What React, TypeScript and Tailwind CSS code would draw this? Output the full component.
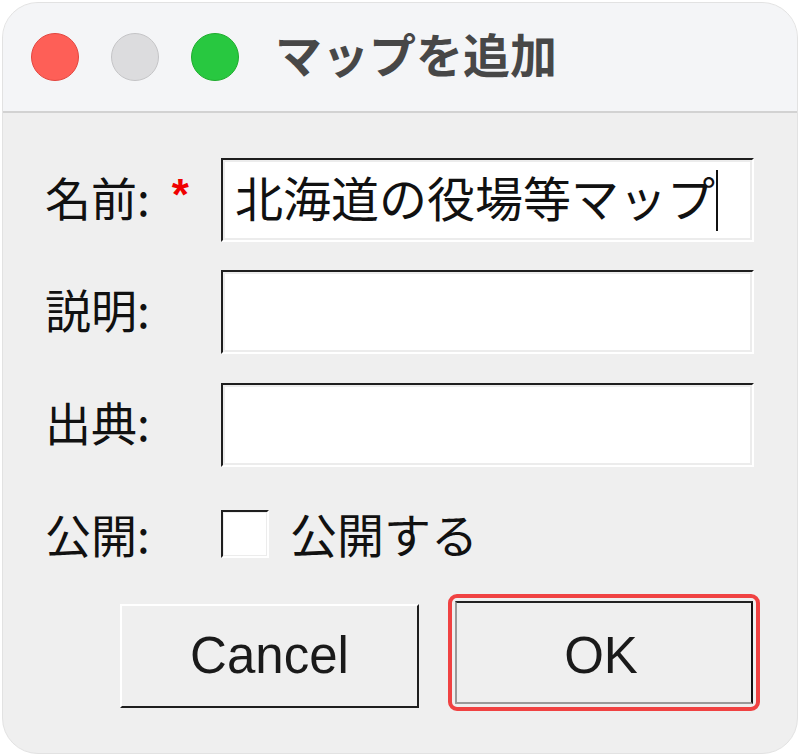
import React from "react";

const jp = { fontFamily: '"Noto Sans CJK JP", "Noto Sans", sans-serif' };
const lat = { fontFamily: '"Liberation Sans", Arial, sans-serif' };

function Field({ children }: { children?: React.ReactNode }) {
  return (
    <div className="w-[533px] h-[84px] bg-white border-2 border-t-[#1e1e1e] border-l-[#1e1e1e] border-b-white border-r-white shadow-[inset_0_0_0_2px_#ececec] flex items-center pl-[12px]">
      {children}
    </div>
  );
}

export default function App() {
  return (
    <div className="w-[800px] h-[756px] bg-white p-[2px]">
      <div className="w-full h-full rounded-[36px] border border-[#e2e2e2] overflow-hidden bg-[#efefef] flex flex-col">
        {/* Title bar */}
        <div className="h-[110px] shrink-0 bg-[#f4f5f7] border-b-2 border-[#d2d2d2] flex items-center pl-[28px] pb-[1px]">
          <div className="w-[48px] h-[48px] rounded-full bg-[#fe5f57] border border-[#e2463f]" />
          <div className="w-[48px] h-[48px] rounded-full bg-[#dcdcde] border border-[#c4c4c6] ml-[32px]" />
          <div className="w-[48px] h-[48px] rounded-full bg-[#28c840] border border-[#1fac2e] ml-[32px]" />
          <div className="ml-[36px] text-[47px] font-bold text-[#474747] leading-none mb-[8px]" style={jp}>
            マップを追加
          </div>
        </div>

        {/* Body */}
        <div className="flex flex-col pl-[42px] pt-[45px] text-[#111]" style={jp}>
          <div className="flex items-center">
            <div className="w-[176px] flex items-center text-[46px] leading-none mb-[8px]">
              <span>名前:</span>
              <span className="ml-[22px] text-[44px] font-bold text-[#f00000] mb-[2px]" style={lat}>*</span>
            </div>
            <Field>
              <span className="text-[48px] leading-none mb-[8px]">北海道の役場等マップ</span>
              <span className="ml-[1px] w-[2px] h-[61px] bg-[#111]" />
            </Field>
          </div>

          <div className="flex items-center mt-[28px]">
            <div className="w-[176px] text-[46px] leading-none mb-[8px]">説明:</div>
            <Field />
          </div>

          <div className="flex items-center mt-[29px]">
            <div className="w-[176px] text-[46px] leading-none mb-[8px]">出典:</div>
            <Field />
          </div>

          <div className="flex items-center mt-[42px]">
            <div className="w-[176px] text-[46px] leading-none mb-[2px]">公開:</div>
            <div className="w-[48px] h-[48px] bg-white border-2 border-t-[#1e1e1e] border-l-[#1e1e1e] border-b-white border-r-white shadow-[inset_0_0_0_1px_#ececec]" />
            <div className="ml-[21px] text-[47px] leading-none mb-[2px]">公開する</div>
          </div>

          <div className="flex items-start mt-[36px] ml-[75px]">
            <button
              className="mt-[10px] w-[299px] h-[104px] bg-[#efefef] border-2 border-t-white border-l-white border-b-[#1e1e1e] border-r-[#1e1e1e] text-[51px] text-[#1a1a1a] flex items-center justify-center"
              style={lat}
            >
              Cancel
            </button>
            <div className="ml-[29px] border-4 border-[#f04242] rounded-[9px] p-[3px]">
              <button
                className="w-[298px] h-[103px] bg-[#efefef] border-2 border-t-[#222] border-r-[#111] border-l-[#9a9a9a] border-b-[#9a9a9a] text-[51px] text-[#1a1a1a] flex items-center justify-center pt-[8px] pr-[6px]"
                style={lat}
              >
                OK
              </button>
            </div>
          </div>
        </div>
      </div>
    </div>
  );
}
